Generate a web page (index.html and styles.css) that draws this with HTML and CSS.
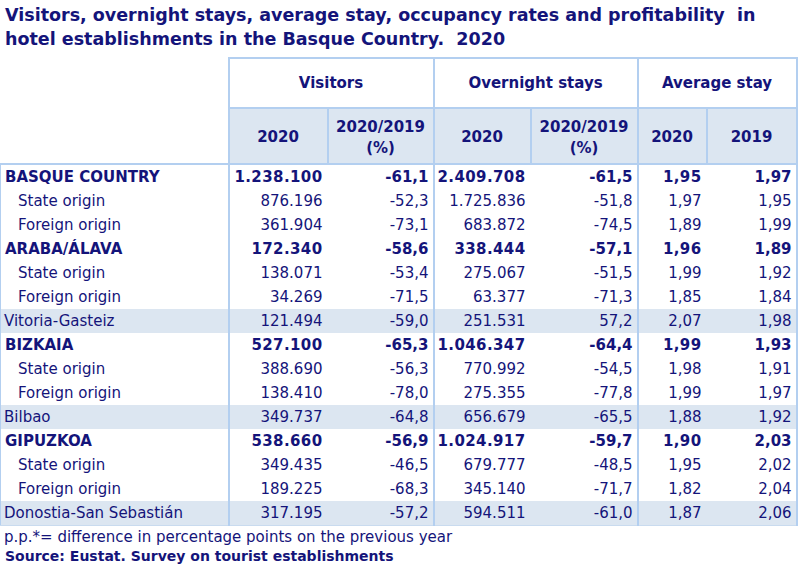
FILE: index.html
```html
<!DOCTYPE html>
<html>
<head>
<meta charset="utf-8">
<link rel="stylesheet" href="styles.css">
</head>
<body>
<h1 class="title">Visitors, overnight stays, average stay, occupancy rates and profitability&nbsp; in<br>hotel establishments in the Basque Country.&nbsp; 2020</h1>
<table class="tbl">
  <colgroup>
    <col class="c-label"><col class="c-v1"><col class="c-v2"><col class="c-o1"><col class="c-o2"><col class="c-a1"><col class="c-a2">
  </colgroup>
  <thead>
    <tr class="h1">
      <th class="blank"></th>
      <th colspan="2" class="grp">Visitors</th>
      <th colspan="2" class="grp">Overnight stays</th>
      <th colspan="2" class="grp">Average stay</th>
    </tr>
    <tr class="h2">
      <th class="blank"></th>
      <th class="sub gl">2020</th>
      <th class="sub">2020/2019<br>(%)</th>
      <th class="sub gl">2020</th>
      <th class="sub">2020/2019<br>(%)</th>
      <th class="sub gl">2020</th>
      <th class="sub gr">2019</th>
    </tr>
  </thead>
  <tbody>
    <tr class="b first"><td class="lbl">BASQUE COUNTRY</td><td class="gl">1.238.100</td><td>-61,1</td><td class="gl">2.409.708</td><td>-61,5</td><td class="gl">1,95</td><td class="gr">1,97</td></tr>
    <tr><td class="lbl ind">State origin</td><td class="gl">876.196</td><td>-52,3</td><td class="gl">1.725.836</td><td>-51,8</td><td class="gl">1,97</td><td class="gr">1,95</td></tr>
    <tr><td class="lbl ind">Foreign origin</td><td class="gl">361.904</td><td>-73,1</td><td class="gl">683.872</td><td>-74,5</td><td class="gl">1,89</td><td class="gr">1,99</td></tr>
    <tr class="b"><td class="lbl">ARABA/ÁLAVA</td><td class="gl">172.340</td><td>-58,6</td><td class="gl">338.444</td><td>-57,1</td><td class="gl">1,96</td><td class="gr">1,89</td></tr>
    <tr><td class="lbl ind">State origin</td><td class="gl">138.071</td><td>-53,4</td><td class="gl">275.067</td><td>-51,5</td><td class="gl">1,99</td><td class="gr">1,92</td></tr>
    <tr><td class="lbl ind">Foreign origin</td><td class="gl">34.269</td><td>-71,5</td><td class="gl">63.377</td><td>-71,3</td><td class="gl">1,85</td><td class="gr">1,84</td></tr>
    <tr class="city"><td class="lbl cit">Vitoria-Gasteiz</td><td class="gl">121.494</td><td>-59,0</td><td class="gl">251.531</td><td>57,2</td><td class="gl">2,07</td><td class="gr">1,98</td></tr>
    <tr class="b"><td class="lbl">BIZKAIA</td><td class="gl">527.100</td><td>-65,3</td><td class="gl">1.046.347</td><td>-64,4</td><td class="gl">1,99</td><td class="gr">1,93</td></tr>
    <tr><td class="lbl ind">State origin</td><td class="gl">388.690</td><td>-56,3</td><td class="gl">770.992</td><td>-54,5</td><td class="gl">1,98</td><td class="gr">1,91</td></tr>
    <tr><td class="lbl ind">Foreign origin</td><td class="gl">138.410</td><td>-78,0</td><td class="gl">275.355</td><td>-77,8</td><td class="gl">1,99</td><td class="gr">1,97</td></tr>
    <tr class="city"><td class="lbl cit">Bilbao</td><td class="gl">349.737</td><td>-64,8</td><td class="gl">656.679</td><td>-65,5</td><td class="gl">1,88</td><td class="gr">1,92</td></tr>
    <tr class="b"><td class="lbl">GIPUZKOA</td><td class="gl">538.660</td><td>-56,9</td><td class="gl">1.024.917</td><td>-59,7</td><td class="gl">1,90</td><td class="gr">2,03</td></tr>
    <tr><td class="lbl ind">State origin</td><td class="gl">349.435</td><td>-46,5</td><td class="gl">679.777</td><td>-48,5</td><td class="gl">1,95</td><td class="gr">2,02</td></tr>
    <tr><td class="lbl ind">Foreign origin</td><td class="gl">189.225</td><td>-68,3</td><td class="gl">345.140</td><td>-71,7</td><td class="gl">1,82</td><td class="gr">2,04</td></tr>
    <tr class="city last"><td class="lbl cit">Donostia-San Sebastián</td><td class="gl">317.195</td><td>-57,2</td><td class="gl">594.511</td><td>-61,0</td><td class="gl">1,87</td><td class="gr">2,06</td></tr>
  </tbody>
</table>
<p class="note">p.p.*= difference in percentage points on the previous year</p>
<p class="source">Source: Eustat. Survey on tourist establishments</p>
</body>
</html>
```
FILE: styles.css
```css
html, body {
  margin: 0;
  padding: 0;
  background: #ffffff;
}
body {
  font-family: "DejaVu Sans", Verdana, sans-serif;
  color: #14147a;
}
.title {
  margin: 0;
  padding: 3px 5px 0 5px;
  font-size: 17.5px;
  line-height: 24px;
  font-weight: bold;
  color: #14147a;
  height: 57px;
  box-sizing: border-box;
  white-space: nowrap;
}
.tbl {
  border-collapse: collapse;
  table-layout: fixed;
  width: 796px;
  font-size: 15px;
}
.c-label { width: 228px; }
.c-v1 { width: 99px; }
.c-v2 { width: 106px; }
.c-o1 { width: 97px; }
.c-o2 { width: 107px; }
.c-a1 { width: 69px; }
.c-a2 { width: 90px; }
th, td {
  padding: 0;
}
th {
  font-weight: bold;
  text-align: center;
  color: #14147a;
}
.h1 th.grp {
  height: 48px;
  border: 2px solid #b3cff0;
  background: #ffffff;
}
.h2 th.sub {
  height: 51px;
  background: #dce6f1;
  border: 2px solid #b3cff0;
  line-height: 21px;
  padding-top: 3px;
}
th.blank {
  border: none;
  background: #ffffff;
}
tbody td {
  height: 24px;
  text-align: right;
  padding-right: 4px;
  white-space: nowrap;
}
tbody td.gl {
  border-left: 2px solid #b3cff0;
  padding-right: 5px;
}
tbody td.gr {
  border-right: 2px solid #b3cff0;
}
tbody tr.b td.gl {
  letter-spacing: 0.4px;
}
tbody td.lbl {
  text-align: left;
  border-left: 1px solid #b3cff0;
  padding-left: 4px;
}
tbody td.ind { padding-left: 17px; }
tbody td.cit { padding-left: 3px; }
tbody tr.first td { border-top: 2px solid #b3cff0; }
tbody tr.b td { font-weight: bold; }
tbody tr.city td { background: #dce6f1; }
tbody tr.last td { border-bottom: 1px solid #c9dbef; }
.note {
  margin: 0;
  padding: 2px 0 0 4px;
  font-size: 15px;
  line-height: 19px;
}
.source {
  margin: 0;
  padding-left: 5px;
  font-size: 14px;
  line-height: 18px;
  font-weight: bold;
}
```
